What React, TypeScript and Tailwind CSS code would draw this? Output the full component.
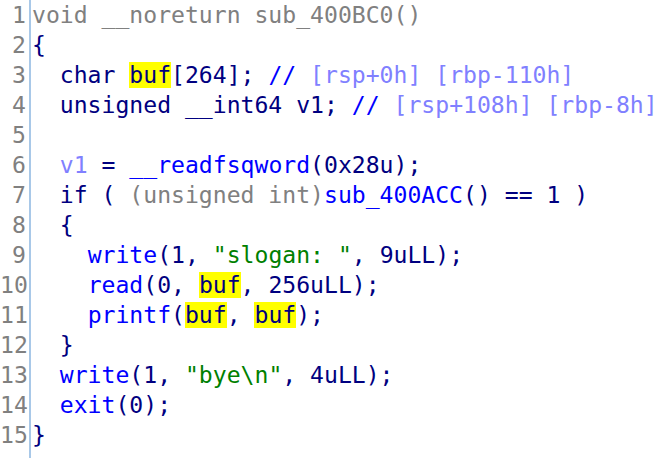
type Tok = [string, string];

const N = "text-[#000080]";
const B = "text-[#0000ff]";
const G = "text-[#808080]";
const L = "text-[#8080ff]";
const S = "text-[#008000]";
const H = "hl";

const lines: Tok[][] = [
  [["void __noreturn sub_400BC0()", G]],
  [["{", N]],
  [["  char ", N], ["buf", H], ["[264]; ", N], ["//", B], [" [rsp+0h] [rbp-110h]", L]],
  [["  unsigned __int64 v1; ", N], ["//", B], [" [rsp+108h] [rbp-8h]", L]],
  [],
  [["  ", N], ["v1", L], [" = ", N], ["__readfsqword", B], ["(0x28u);", N]],
  [["  if ( ", N], ["(unsigned int)", G], ["sub_400ACC", B], ["() == 1 )", N]],
  [["  {", N]],
  [["    ", N], ["write", B], ["(1, ", N], ['"slogan: "', S], [", 9uLL);", N]],
  [["    ", N], ["read", B], ["(0, ", N], ["buf", H], [", 256uLL);", N]],
  [["    ", N], ["printf", B], ["(", N], ["buf", H], [", ", N], ["buf", H], [");", N]],
  [["  }", N]],
  [["  ", N], ["write", B], ["(1, ", N], ['"bye\\n"', S], [", 4uLL);", N]],
  [["  ", N], ["exit", B], ["(0);", N]],
  [["}", N]],
];

function Token({ text, cls }: { text: string; cls: string }) {
  if (cls === H) {
    return <span className="bg-[#ffff00] text-[#000080]">{text}</span>;
  }
  return <span className={cls}>{text}</span>;
}

export default function App() {
  return (
    <div className="w-[670px] h-[458px] bg-white flex overflow-hidden font-['DejaVu_Sans_Mono',monospace] text-[23.1px] leading-[30px]">
      {/* line numbers */}
      <div className="w-[31px] shrink-0 border-r-2 border-[#a8c8e8] pr-[3px] text-right text-[#808080]">
        {lines.map((_, i) => (
          <div key={i} className="h-[30px]">
            {i + 1}
          </div>
        ))}
      </div>

      {/* pseudocode */}
      <div className="pl-[1px] whitespace-pre">
        {lines.map((toks, i) => (
          <div key={i} className="h-[30px]">
            {toks.map(([t, c], j) => (
              <Token key={j} text={t} cls={c} />
            ))}
          </div>
        ))}
      </div>
    </div>
  );
}
